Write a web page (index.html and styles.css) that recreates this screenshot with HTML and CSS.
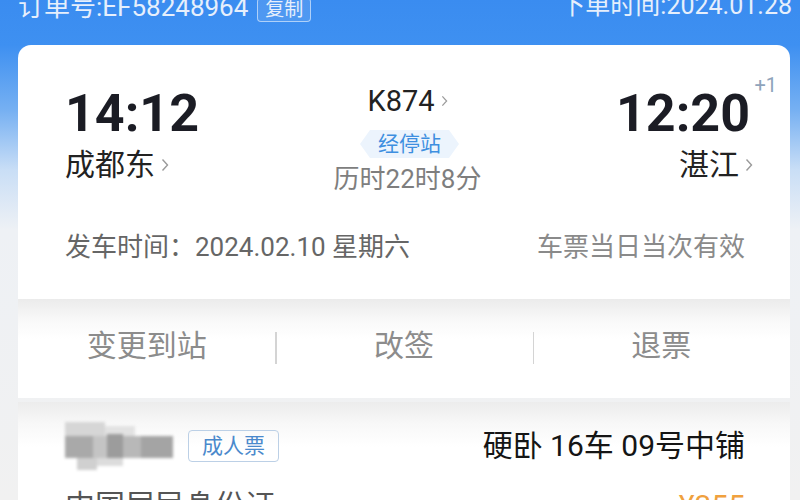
FILE: index.html
```html
<!DOCTYPE html>
<html lang="zh-CN">
<head>
    <meta charset="UTF-8">
    <meta name="viewport" content="width=device-width, initial-scale=1.0">
    <title>订单详情</title>
    <link rel="stylesheet" href="styles.css">
</head>
<body>
    <header class="order-bar">
        <div class="order-no">订单号:EF58248964<span class="copy">复制</span></div>
        <div class="order-time">下单时间:2024.01.28</div>
    </header>

    <section class="trip-card">
        <div class="trip-main">
            <div class="stop">
                <div class="time">14:12</div>
                <div class="station">成都东<svg class="chev" viewBox="0 0 8 14" width="8" height="14"><polyline points="1.5,1.5 6.5,7 1.5,12.5"/></svg></div>
            </div>
            <div class="train">
                <div class="train-no">K874<svg class="chev" viewBox="0 0 8 14" width="7" height="12"><polyline points="1.5,1.5 6.5,7 1.5,12.5"/></svg></div>
                <div class="via">经停站</div>
                <div class="duration">历时22时8分</div>
            </div>
            <div class="stop arrive">
                <div class="time">12:20<span class="plus-day">+1</span></div>
                <div class="station">湛江<svg class="chev" viewBox="0 0 8 14" width="8" height="14"><polyline points="1.5,1.5 6.5,7 1.5,12.5"/></svg></div>
            </div>
        </div>
        <div class="trip-foot">
            <span class="date">发车时间：2024.02.10 星期六</span>
            <span class="valid">车票当日当次有效</span>
        </div>
    </section>

    <section class="actions">
        <div class="action">变更到站</div>
        <div class="action">改签</div>
        <div class="action">退票</div>
    </section>

    <section class="passenger">
        <div class="pass-row">
            <div class="pass-name">
                <!-- 姓名已打码 -->
                <svg class="blur-name" viewBox="0 0 110 52" width="110" height="52">
                    <rect x="0" y="2" width="40" height="14" fill="#d6d6d6"/>
                    <rect x="40" y="6" width="30" height="10" fill="#e2e2e2"/>
                    <rect x="0" y="16" width="28" height="22" fill="#a9a9a9"/>
                    <rect x="28" y="16" width="14" height="22" fill="#c4c4c4"/>
                    <rect x="42" y="14" width="16" height="24" fill="#9c9c9c"/>
                    <rect x="58" y="16" width="18" height="22" fill="#b8b8b8"/>
                    <rect x="76" y="16" width="32" height="22" fill="#a4a4a4"/>
                    <rect x="12" y="38" width="20" height="12" fill="#d0d0d0"/>
                    <rect x="32" y="38" width="26" height="8" fill="#dcdcdc"/>
                </svg>
                <span class="tag">成人票</span>
            </div>
            <div class="seat">硬卧 16车 09号中铺</div>
        </div>
        <div class="pass-row">
            <div class="id-type">中国居民身份证</div>
            <div class="price">¥355</div>
        </div>
    </section>
</body>
</html>
```

FILE: styles.css
```css
body {
    margin: 0;
    width: 800px;
    height: 500px;
    overflow: hidden;
    font-family: Roboto, "Noto Sans CJK SC", sans-serif;
    background: linear-gradient(180deg, #3a8cf0 0, #3e90f1 45px, #76b0f2 110px, #c9def6 170px, #eef1f5 230px, #f1f1f1 100%);
}

/* barra superiore */
.order-bar {
    display: flex;
    justify-content: space-between;
    align-items: flex-start;
    height: 45px;
    padding: 0 8px 0 18px;
    box-sizing: border-box;
    color: #e6effc;
}

.order-no {
    display: flex;
    align-items: center;
    font-size: 26px;
    line-height: 30px;
    margin-top: -9px;
}

.copy {
    margin-left: 9px;
    margin-top: 7px;
    padding: 0 7px;
    font-size: 19px;
    line-height: 22px;
    border: 1.5px solid rgba(255, 255, 255, 0.55);
    border-radius: 4px;
    background: rgba(255, 255, 255, 0.1);
}

.order-time {
    font-size: 25px;
    line-height: 30px;
    margin-top: -9px;
}

/* scheda viaggio */
.trip-card {
    margin: 0 10px 0 18px;
    padding: 42px 40px 35px 47px;
    background: #fff;
    border-radius: 13px 13px 0 0;
}

.trip-main {
    display: grid;
    grid-template-columns: 1fr auto 1fr;
}

.time {
    position: relative;
    font-size: 52px;
    line-height: 54px;
    font-weight: 700;
    color: #1b1c24;
}

.plus-day {
    position: absolute;
    right: -27px;
    top: -12px;
    font-size: 20px;
    line-height: 20px;
    font-weight: 400;
    color: #8ea3bb;
}

.station {
    display: flex;
    align-items: center;
    margin-top: 6px;
    font-size: 30px;
    line-height: 36px;
    color: #222;
}

.chev {
    margin-left: 6px;
    fill: none;
    stroke: #9a9a9a;
    stroke-width: 1.4;
}

.arrive {
    display: flex;
    flex-direction: column;
    align-items: flex-end;
}

.arrive .station {
    margin-right: -3px;
}

.train {
    display: flex;
    flex-direction: column;
    align-items: center;
    margin-top: -2px;
}

.train-no {
    display: flex;
    align-items: center;
    font-size: 29px;
    line-height: 32px;
    color: #222;
}

.via {
    margin-top: 13px;
    margin-left: 4px;
    padding: 0 18px;
    height: 28px;
    font-size: 21px;
    line-height: 28px;
    color: #3e8fe0;
    background: #ecf4fd;
    clip-path: polygon(10px 0, calc(100% - 10px) 0, 100% 50%, calc(100% - 10px) 100%, 10px 100%, 0 50%);
}

.duration {
    margin-top: 6px;
    font-size: 26px;
    line-height: 30px;
    color: #7e7e7e;
}

.trip-foot {
    display: flex;
    justify-content: space-between;
    margin-top: 36px;
    font-size: 26px;
    line-height: 34px;
}

.date {
    color: #666;
}

.valid {
    color: #8a8a8a;
    margin-right: 5px;
}

/* azioni */
.actions {
    display: grid;
    grid-template-columns: 1fr 1fr 1fr;
    align-items: center;
    height: 99px;
    margin: 0 10px 4px 18px;
    background: linear-gradient(180deg, #ebebeb 0, #f9f9f9 22px, #fff 40px);
}

.action {
    position: relative;
    text-align: center;
    font-size: 30px;
    line-height: 40px;
    color: #8c8c8c;
    margin-top: -6px;
}

.action + .action::before {
    content: "";
    position: absolute;
    left: 0;
    top: 6px;
    width: 1.5px;
    height: 32px;
    background: #d4d4d4;
}

/* passeggero */
.passenger {
    margin: 0 10px 0 18px;
    padding: 18px 45px 0 47px;
    height: 100px;
    background: linear-gradient(180deg, #ececec 0, #f8f8f8 22px, #fff 45px);
}

.pass-row {
    display: flex;
    justify-content: space-between;
    align-items: center;
}

.pass-row + .pass-row {
    margin-top: 14px;
}

.pass-name {
    display: flex;
    align-items: center;
    height: 52px;
}

.blur-name {
    filter: blur(1.5px);
}

.tag {
    margin-left: 13px;
    padding: 0 13px;
    font-size: 21px;
    line-height: 30px;
    color: #4a89cc;
    border: 1px solid #bcd0e6;
    border-radius: 4px;
}

.seat {
    font-size: 30px;
    line-height: 40px;
    color: #151515;
}

.id-type {
    font-size: 30px;
    line-height: 40px;
    color: #555;
}

.price {
    font-size: 30px;
    line-height: 40px;
    color: #f0a13e;
}
```
